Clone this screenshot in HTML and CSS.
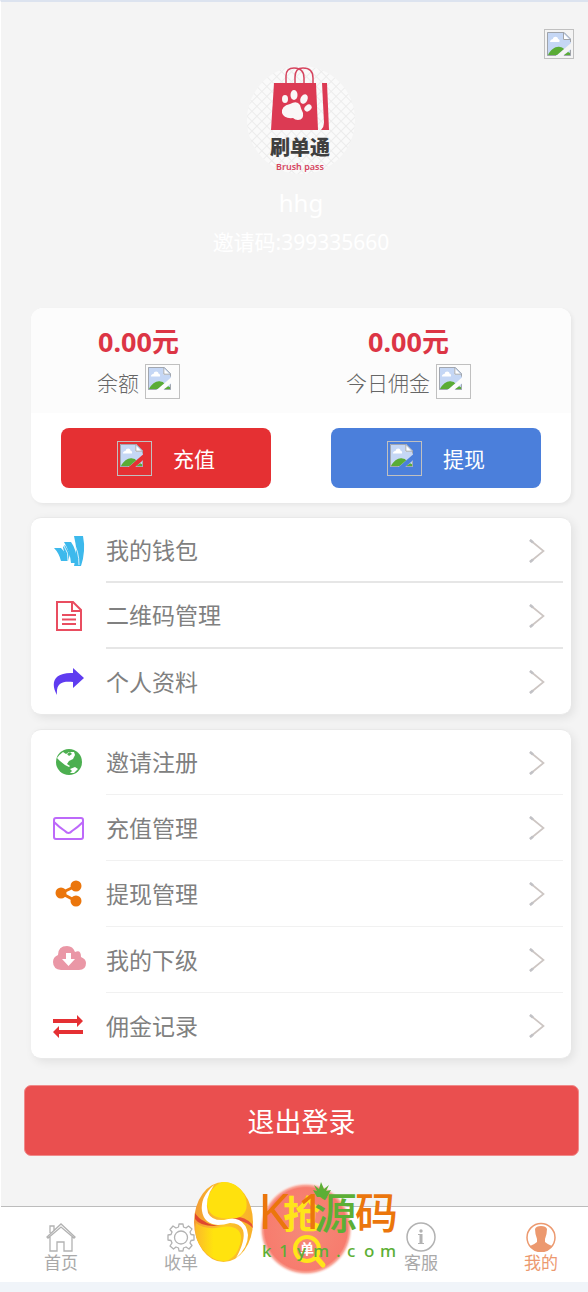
FILE: index.html
```html
<!DOCTYPE html>
<html lang="zh-CN">
<head>
    <meta charset="UTF-8">
    <meta name="viewport" content="width=device-width, initial-scale=1.0">
    <title>我的</title>
    <link rel="stylesheet" href="styles.css">
</head>
<body>
    <!-- shared icons -->
    <svg class="sprite" width="0" height="0" aria-hidden="true">
        <symbol id="broken" viewBox="0 0 24 24">
            <path d="M0 0H17L24 7V11L9 24H0Z" fill="#c5d7f5"/>
            <path d="M24 17V24H16Z" fill="#c5d7f5"/>
            <path d="M3 10C3 8 5 7 6 7C6 4 11 4 11 7C13 7 13 10 12 10Z" fill="#fff"/>
            <path d="M1 23C4 17 9 14 13 15C15 15 16 16 17 17L10 23Z" fill="#5aac36"/>
            <path d="M21 20L23 21V23H17Z" fill="#5aac36"/>
            <path d="M16 1V8H23Z" fill="#fff"/>
            <path d="M9 23.500H.5V.5H17L23.500 7V10M16.500 1V7.500H23M23.500 18V23.500H17" fill="none" stroke="#a0a4aa"/>
        </symbol>
        <symbol id="arrow" viewBox="0 0 16 24">
            <path d="M1 1L14.500 12L1 23" fill="none" stroke="#cdc6c3" stroke-width="1.700"/>
            <path d="M1 1L4 3.500M1 23L4 20.500" fill="none" stroke="#c2c2c6" stroke-width="2.600"/>
        </symbol>
    </svg>

    <div class="screen">
        <div class="page">
            <header class="profile">
                <button class="settings" type="button" aria-label="设置"><svg class="broken-img"><use href="#broken"/></svg></button>
                <svg class="avatar" viewBox="0 0 108 108">
                    <defs>
                        <pattern id="grid" width="7" height="7" patternUnits="userSpaceOnUse" patternTransform="rotate(45)">
                            <rect width="7" height="7" fill="#fafafa"/>
                            <path d="M0 0H7M0 0V7" stroke="#ececec" stroke-width="2"/>
                        </pattern>
                    </defs>
                    <circle cx="54" cy="54" r="54" fill="url(#grid)"/>
                    <g fill="none" stroke="#d6455f" stroke-width="1.500">
                        <path d="M39 18V10Q39 2 47 2Q57 2 57 12V18"/>
                        <path d="M48 18V11Q48 2 56 2Q66 2 66 12V18"/>
                    </g>
                    <path d="M27 17H69L71 64H24Z" fill="#dc3a53"/>
                    <path d="M75 17H80L82 64H74Q77 61 77 57Z" fill="#dc3a53"/>
                    <g fill="#faf7f7">
                        <ellipse cx="38" cy="33" rx="3" ry="4"/>
                        <ellipse cx="47" cy="29" rx="3.500" ry="5"/>
                        <ellipse cx="57" cy="33" rx="3.500" ry="5" transform="rotate(25 57 33)"/>
                        <ellipse cx="61" cy="42" rx="3" ry="4" transform="rotate(50 61 42)"/>
                        <path d="M43 38Q50 34 53 39Q54 43 56 47Q57 54 51 54Q48 54 46 52Q37 53 35 47Q34 40 43 38Z"/>
                    </g>
                    <text x="53" y="89" class="avatar-name">刷单通</text>
                    <text x="53" y="104" class="avatar-sub">Brush pass</text>
                </svg>
                <div class="nickname">hhg</div>
                <div class="invite">邀请码:399335660</div>
            </header>

            <section class="balance">
                <div class="figures">
                    <div class="figure">
                        <strong>0.00元</strong>
                        <span class="caption">余额 <svg class="broken-img"><use href="#broken"/></svg></span>
                    </div>
                    <div class="figure">
                        <strong>0.00元</strong>
                        <span class="caption">今日佣金 <svg class="broken-img"><use href="#broken"/></svg></span>
                    </div>
                </div>
                <div class="actions">
                    <button class="action recharge" type="button"><svg class="broken-img"><use href="#broken"/></svg>充值</button>
                    <button class="action withdraw" type="button"><svg class="broken-img"><use href="#broken"/></svg>提现</button>
                </div>
            </section>

            <nav class="menu menu-dark">
                <a href="#wallet">
                    <svg class="icon" viewBox="0 0 34 34" fill="#3db9ec">
                        <path d="M2 14H9Q15 20 16 27H9Q7 19 2 14Z"/>
                        <path d="M12 8H19Q25 16 25 29H19Q18 18 12 8Z"/>
                        <path d="M13 11L18 20L16 27L12 18L11 13Z"/>
                        <path d="M22 2H31Q34 17 29 32H22Q26 17 22 2Z"/>
                        <path d="M21 8Q27 17 27 31M12 12Q17 19 16 27" fill="none" stroke="#fff" stroke-width=".8"/>
                    </svg>
                    <span class="label">我的钱包</span>
                    <svg class="arrow"><use href="#arrow"/></svg>
                </a>
                <a href="#qrcode">
                    <svg class="icon" viewBox="0 0 34 34" fill="none" stroke="#e94d60" stroke-width="2">
                        <path d="M5 3H21L29 11V31H5ZM20 3V12H29M10 16H24M10 20.500H24M10 25H24"/>
                    </svg>
                    <span class="label">二维码管理</span>
                    <svg class="arrow"><use href="#arrow"/></svg>
                </a>
                <a href="#profile">
                    <svg class="icon" viewBox="0 0 34 34" fill="#5f3cf0">
                        <path d="M21 3L32 13L21 23V17C10 16 4 18 5 30C-2 18 2 7 21 8Z"/>
                    </svg>
                    <span class="label">个人资料</span>
                    <svg class="arrow"><use href="#arrow"/></svg>
                </a>
            </nav>

            <nav class="menu">
                <a href="#invite">
                    <svg class="icon" viewBox="0 0 34 34">
                        <circle cx="17" cy="16" r="13" fill="#4caf50"/>
                        <path d="M5 12Q8 8 11 6L14 8L17 6L22 6L23 9L21 13L17 15L15 18L18 20L17 21L13 19L8 15Z" fill="#fff"/>
                        <path d="M18 23L23 21L26 23L22 27H18L20 25Z" fill="#fff"/>
                        <path d="M15 8L18 6L20 8L17 10Z" fill="#4caf50"/>
                    </svg>
                    <span class="label">邀请注册</span>
                    <svg class="arrow"><use href="#arrow"/></svg>
                </a>
                <a href="#recharge">
                    <svg class="icon" viewBox="0 0 34 34" fill="none" stroke="#bd69fa" stroke-width="2">
                        <rect x="2" y="7" width="29" height="21" rx="2"/>
                        <path d="M2 11Q7 16 13 20Q16.500 24 20 20Q26 16 31 11"/>
                    </svg>
                    <span class="label">充值管理</span>
                    <svg class="arrow"><use href="#arrow"/></svg>
                </a>
                <a href="#withdraw">
                    <svg class="icon" viewBox="0 0 34 34" fill="#eb760c">
                        <circle cx="24" cy="9" r="5.500"/>
                        <circle cx="9" cy="16" r="5.500"/>
                        <circle cx="24" cy="24" r="5.500"/>
                        <path d="M24 9L9 16L24 24" fill="none" stroke="#eb760c" stroke-width="3"/>
                    </svg>
                    <span class="label">提现管理</span>
                    <svg class="arrow"><use href="#arrow"/></svg>
                </a>
                <a href="#team">
                    <svg class="icon" viewBox="0 0 34 34">
                        <path d="M9 27Q1 26 1 19Q1 14 6 12Q6 3 15 3Q21 3 23 9Q29 6 29 14Q34 16 34 20Q34 27 27 27Z" fill="#ea97a6"/>
                        <path d="M14 10H19V16H23L16.500 23L10 16H14Z" fill="#fff"/>
                    </svg>
                    <span class="label">我的下级</span>
                    <svg class="arrow"><use href="#arrow"/></svg>
                </a>
                <a href="#commission">
                    <svg class="icon" viewBox="0 0 34 34" fill="#e53033">
                        <path d="M1 10H25V6L31 12L25 18V14H1Z"/>
                        <path d="M31 21H7V17L1 23L7 29V25H31Z"/>
                    </svg>
                    <span class="label">佣金记录</span>
                    <svg class="arrow"><use href="#arrow"/></svg>
                </a>
            </nav>

            <button class="logout" type="button">退出登录</button>

            <footer class="tabbar">
                <a href="#home">
                    <svg viewBox="0 0 30 30" fill="none" stroke="#b2b2b2" stroke-width="1.300">
                        <path d="M1 15L15 2L29 15L28 16L15 5L2 16ZM4 11V4H8V8M4 15V29H11V20H18V29H26V15"/>
                    </svg>
                    首页
                </a>
                <a href="#orders">
                    <svg viewBox="0 0 30 30" fill="none" stroke="#b2b2b2" stroke-width="1.300">
                        <path d="M12.500 5L13 2H17L17.500 5L20 6L22.500 4L26 7L24 10L25 12.500L28 13V18L25 18.500L24 21L26 23.500L23 27L20 25L17.500 26L17 29H13L12.500 26L10 25L7.500 27L4 24L6 21L5 18.500L2 18V13L5 12.500L6 10L4 7.500L7 4L10 6Z" stroke-linejoin="round"/>
                        <circle cx="15" cy="15.500" r="6.500"/>
                    </svg>
                    收单
                </a>
                <a class="grab" href="#grab" aria-label="抢单">
                    <svg class="grab-icon" viewBox="0 0 96 96">
                        <defs>
                            <radialGradient id="grabFill">
                                <stop offset="0" stop-color="#f58a78"/>
                                <stop offset=".88" stop-color="#f77c6e"/>
                                <stop offset=".93" stop-color="#f9ada0"/>
                                <stop offset="1" stop-color="#fff" stop-opacity="0"/>
                            </radialGradient>
                        </defs>
                        <circle cx="48" cy="48" r="47" fill="url(#grabFill)"/>
                        <text x="44" y="47" class="grab-big">抢</text>
                        <circle cx="49" cy="68" r="12" fill="none" stroke="#ffe51a" stroke-width="4"/>
                        <path d="M58 76L65 84" stroke="#ffe51a" stroke-width="5" stroke-linecap="round"/>
                        <text x="49" y="73" class="grab-small">单</text>
                    </svg>
                </a>
                <a href="#service">
                    <svg viewBox="0 0 30 30">
                        <circle cx="15" cy="15" r="14" fill="none" stroke="#b2b2b2" stroke-width="1.500"/>
                        <path d="M12 12H16.500V21H18V22H12V21H13.500V13H12Z" fill="#b2b2b2"/>
                        <circle cx="15" cy="9" r="1.700" fill="#b2b2b2"/>
                    </svg>
                    客服
                </a>
                <a class="active" href="#mine">
                    <svg viewBox="0 0 30 30">
                        <circle cx="15" cy="15.500" r="14" fill="none" stroke="#ec996f" stroke-width="1.500"/>
                        <path d="M9 7Q10 4 15 4Q20 4 21 7Q21 12 19 17V20Q21 22 26 24Q21 30 15 30Q9 30 4 24Q9 22 11 20V17Q9 12 9 7Z" fill="#ec996f"/>
                    </svg>
                    我的
                </a>

                <!-- site mark floating over the tab bar -->
                <svg class="sitemark" viewBox="0 0 206 84">
                    <defs>
                        <linearGradient id="ball" x2="1">
                            <stop offset="0" stop-color="#f39a35"/>
                            <stop offset=".5" stop-color="#fcc62a"/>
                            <stop offset="1" stop-color="#f9b02b"/>
                        </linearGradient>
                        <linearGradient id="glow" x2="1">
                            <stop offset="0" stop-color="#fbb92b"/>
                            <stop offset=".4" stop-color="#ffe30e"/>
                        </linearGradient>
                    </defs>
                    <ellipse cx="29.500" cy="42" rx="29.500" ry="40" fill="url(#ball)"/>
                    <path d="M1 33Q4 38 10 41Q16 46 26 45L20 46Q6 46 1 39Z" fill="#e0472f"/>
                    <path d="M34 38Q48 34 58 44L59 48Q54 43 47 41Z" fill="#e85238"/>
                    <path d="M3 60Q0 50 2 43Q9 49 22 48Q38 44 44 50Q50 56 44 70Q40 79 31 81Q13 81 3 60Z" fill="url(#glow)"/>
                    <path d="M28 2Q43 1 51 16Q56 31 46 37Q40 40 28 38Q15 37 13 25Q13 9 28 2Z" fill="#ffe10d"/>
                    <path d="M20 5Q6 17 8 31Q10 44 24 45Q30 45 36 43Q46 43 49 50Q52 60 42 78Q54 68 54 55Q53 44 45 40Q39 37 30 40Q18 41 14 33Q10 19 20 5Z" fill="#fff"/>
                    <text y="49" class="mark-big"><tspan x="64 103" class="mark-k">K1</tspan><tspan x="120">源</tspan><tspan x="161" class="orange">码</tspan></text>
                    <path d="M119 10L123 11L120 5L125 9L127 2L130 9L135 5L132 11L137 10L133 17H123Z" fill="#5caf35"/>
                    <text x="68 85 103 119 142 153 170 186" y="77" class="mark-url">k1ym.com</text>
                </svg>
            </footer>
        </div>
    </div>
</body>
</html>
```

FILE: styles.css
```css
* {
    box-sizing: border-box;
}

body {
    margin: 0;
    background-color: #f0f4f9;
    font-family: "Noto Sans", "Noto Sans CJK SC", sans-serif;
    color: #808080;
}

a {
    color: inherit;
    text-decoration: none;
}

button {
    border: none;
    padding: 0;
    font-family: inherit;
    cursor: pointer;
}

svg {
    display: block;
}

.sprite {
    position: absolute;
}

.screen {
    overflow: hidden;
    border-top: 2px solid #dce3ef;
    border-left: 1px solid #fff;
}

/* runs slightly wider than the window, the right edge is cut */
.page {
    margin-right: -13px;
    background-color: #f4f4f4;
}

.broken-img {
    width: 35px;
    height: 35px;
    padding: 2px 8px 8px 2px;
    border: 1px solid #c0c0c0;
}

/* profile */
.profile {
    display: flex;
    flex-direction: column;
    align-items: center;
    padding-top: 27px;
    height: 306px;
    color: #fff;
}

.settings {
    align-self: flex-end;
    margin-right: 27px;
    background: none;
}

.settings .broken-img {
    width: 30px;
    height: 30px;
    padding: 2px;
}

.avatar {
    width: 108px;
    height: 108px;
    margin-top: 7px;
}

.avatar-name {
    font-size: 20px;
    font-weight: 900;
    fill: #3f3f3f;
    text-anchor: middle;
}

.avatar-sub {
    font-size: 9px;
    font-weight: 600;
    fill: #d6455f;
    text-anchor: middle;
}

.nickname {
    margin-top: 12px;
    font-size: 24px;
    line-height: 34px;
}

.invite {
    margin-top: 6px;
    font-size: 21px;
    line-height: 32px;
}

/* balance card */
.balance {
    margin: 0 30px 14px;
    border-radius: 12px;
    background-color: #fff;
    box-shadow: 2px 2px 4px rgba(0, 0, 0, 0.06);
    overflow: hidden;
}

.figures,
.actions {
    display: grid;
    grid-template-columns: 1fr 1fr;
}

.figures {
    height: 105px;
    background-color: #fcfcfc;
}

.figure {
    display: flex;
    flex-direction: column;
    align-items: center;
    padding: 16px 55px 0 0;
}

.figure strong {
    font-size: 27px;
    line-height: 36px;
    color: #dc3545;
}

.caption {
    display: flex;
    gap: 6px;
    margin-top: 4px;
    font-size: 21px;
    font-weight: 300;
    line-height: 39px;
    color: #666;
}

.actions {
    gap: 60px;
    padding: 15px 30px;
}

.action {
    display: flex;
    align-items: center;
    justify-content: center;
    gap: 21px;
    height: 60px;
    border-radius: 8px;
    font-size: 21px;
    color: #fff;
}

.recharge {
    background-color: #e53033;
}

.withdraw {
    background-color: #4b7fdb;
}

/* menu lists */
.menu {
    margin: 0 30px 14px;
    border: 1px solid #e9e9e9;
    border-width: 1px 0;
    border-radius: 10px;
    background-color: #fff;
    box-shadow: 3px 3px 10px rgba(0, 0, 0, 0.08);
}

.menu a {
    display: grid;
    grid-template-columns: 34px 1fr;
    column-gap: 20px;
    align-items: center;
    height: 66px;
    padding: 0 8px 0 21px;
    position: relative;
    font-size: 23px;
}

.menu a:first-child,
.menu a:last-child {
    height: 65px;
}

.icon {
    width: 34px;
    height: 34px;
}

.label {
    display: flex;
    align-items: center;
    height: 100%;
    padding-bottom: 2px;
    border-bottom: 1px solid #f1f1f1;
}

.menu-dark .label {
    border-bottom: 2px solid #e6e6e6;
}

.menu a:last-child .label {
    border-bottom: none;
}

.arrow {
    position: absolute;
    right: 26px;
    width: 16px;
    height: 24px;
}

.logout {
    display: block;
    width: calc(100% - 45px);
    height: 71px;
    margin: 26px 22px 50px 23px;
    border: 1px solid #f08a8a;
    border-radius: 7px;
    background-color: #ea4f4f;
    font-size: 27px;
    color: #fff;
}

/* bottom tabs */
.tabbar {
    display: grid;
    grid-template-columns: repeat(5, 1fr);
    position: relative;
    height: 76px;
    border-top: 1px solid #bcbcbc;
    background-color: #fff;
    font-size: 17px;
    line-height: 22px;
    color: #a9a9a9;
}

.tabbar a {
    display: flex;
    flex-direction: column;
    align-items: center;
    padding-top: 15px;
}

.tabbar a svg {
    width: 30px;
    height: 30px;
}

.tabbar .active {
    color: #ec996f;
}

.tabbar .grab-icon {
    position: absolute;
    top: -26px;
    left: calc(50% - 43px);
    width: 96px;
    height: 96px;
}

.grab-big {
    font-size: 38px;
    font-weight: 700;
    fill: #ffe51a;
    text-anchor: middle;
}

.grab-small {
    font-size: 14px;
    font-weight: 700;
    fill: #fff;
    text-anchor: middle;
}

.sitemark {
    position: absolute;
    top: -27px;
    left: calc(50% - 107px);
    width: 206px;
    height: 84px;
    pointer-events: none;
}

.mark-big {
    font-size: 43px;
    font-weight: 500;
    fill: #5caf35;
}

.mark-k {
    font-size: 50px;
    font-weight: 400;
    fill: #eb760c;
}

.mark-big .orange {
    fill: #eb760c;
}

.mark-url {
    font-size: 17px;
    font-weight: 500;
    fill: #5caf35;
}
```
